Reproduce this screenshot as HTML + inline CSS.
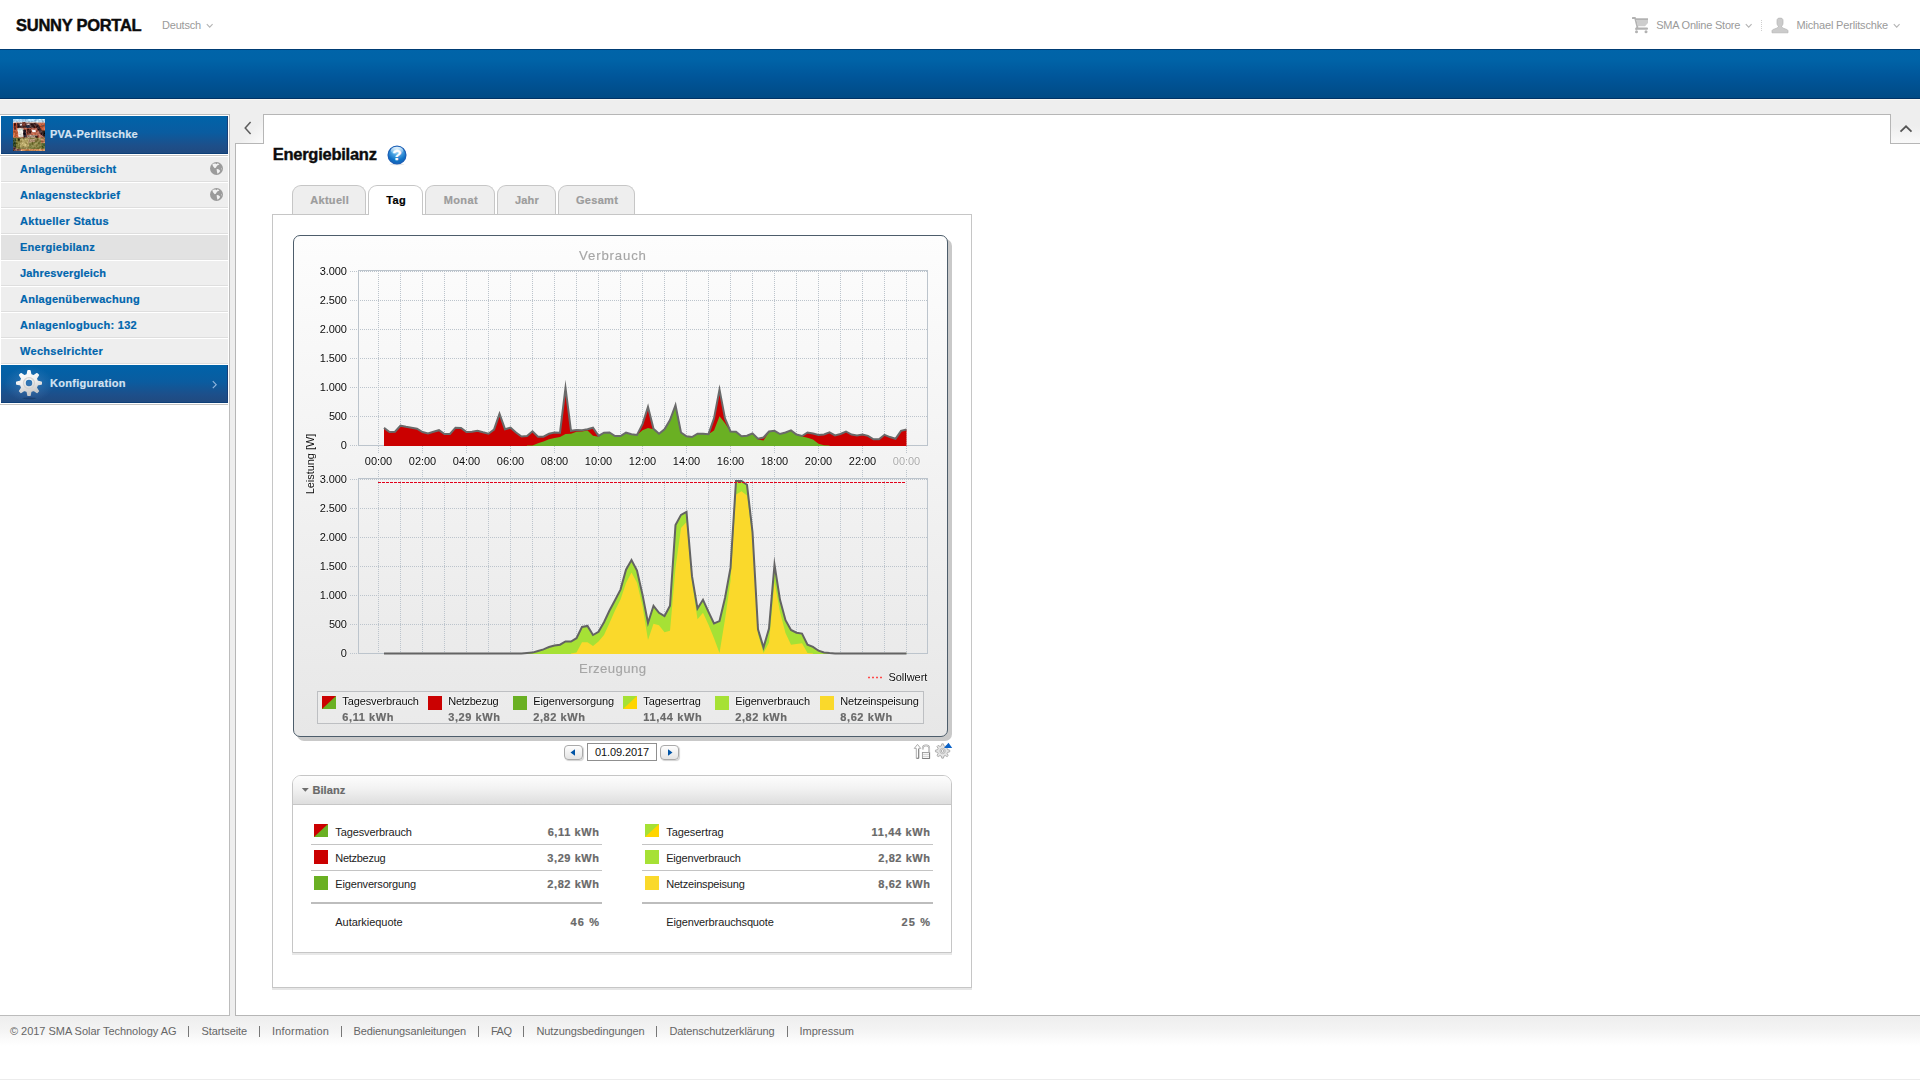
<!DOCTYPE html><html><head><meta charset="utf-8"><title>Sunny Portal</title><style>html,body{margin:0;padding:0;}
body{width:1920px;height:1080px;overflow:hidden;background:#fff;font-family:"Liberation Sans", sans-serif;font-size:11px;position:relative;}
div,span{box-sizing:border-box;}
.abs{position:absolute;}
#chart text:not([stroke]){paint-order:stroke;stroke:rgba(255,255,255,0.55);stroke-width:1.3px;stroke-linejoin:round;}</style></head><body>
<div style="position:absolute;left:16px;top:17.03px;font-size:16.5px;line-height:16.5px;font-weight:bold;color:#0c0c0c;letter-spacing:-0.271px;white-space:nowrap;-webkit-text-stroke:0.45px #0c0c0c;">SUNNY PORTAL</div>
<div style="position:absolute;left:162px;top:19.69px;font-size:11px;line-height:11px;font-weight:normal;color:#9a9a9a;letter-spacing:-0.194px;white-space:nowrap;">Deutsch</div>
<svg class="abs" style="left:206px;top:23px" width="8" height="6"><path d="M0.8,1.2 L3.7,4.2 L6.6,1.2" fill="none" stroke="#b4b4b4" stroke-width="1.1"/></svg>
<svg class="abs" style="left:1630px;top:15px" width="20" height="20" viewBox="1630 15 20 20">
<g fill="#b2b2b2"><rect x="1632" y="17" width="3.8" height="2" rx="0.6"/>
<path d="M1634.2,18 L1636,18 L1638.4,27.2 L1636.6,27.6 Z"/>
<path d="M1636,18.4 H1648 V23 L1645,26.2 H1637.8 Z" fill="#cdcdcd"/>
<rect x="1636" y="18.4" width="12" height="1.6"/>
<path d="M1636.6,26.8 L1638.4,27.2 L1637,29.8 H1635.2 Z"/>
<rect x="1635.2" y="27.6" width="12.8" height="2.2" rx="1"/>
<circle cx="1636.5" cy="31.8" r="1.5"/><circle cx="1646" cy="31.8" r="1.5"/></g></svg>
<div style="position:absolute;left:1656.2px;top:19.69px;font-size:11px;line-height:11px;font-weight:normal;color:#9a9a9a;letter-spacing:-0.215px;white-space:nowrap;">SMA Online Store</div>
<svg class="abs" style="left:1745px;top:23px" width="8" height="6"><path d="M0.8,1.2 L3.7,4.2 L6.6,1.2" fill="none" stroke="#b4b4b4" stroke-width="1.1"/></svg>
<div class="abs" style="left:1761px;top:20px;width:1px;height:11px;background:repeating-linear-gradient(to bottom,#cfcfcf 0,#cfcfcf 1px,transparent 1px,transparent 2px)"></div>
<svg class="abs" style="left:1770px;top:16px" width="20" height="19" viewBox="1770 16 20 19">
<path d="M1777,20.5 C1777,18.7 1778.2,18.1 1780,18.1 C1781.8,18.1 1783,18.7 1783,20.5 V23 C1783,24.6 1782.4,25.6 1781.6,26.2 V27 C1782.6,28.2 1784.5,28.6 1786,29.2 C1787.4,29.6 1788,30.2 1788,31 V32.8 H1772 V31 C1772,30.2 1772.6,29.6 1774,29.2 C1775.5,28.6 1777.4,28.2 1778.4,27 V26.2 C1777.6,25.6 1777,24.6 1777,23 Z" fill="#cbcbcb" stroke="#b4b4b4" stroke-width="0.7"/>
</svg>
<div style="position:absolute;left:1796.5px;top:19.69px;font-size:11px;line-height:11px;font-weight:normal;color:#9a9a9a;letter-spacing:-0.172px;white-space:nowrap;">Michael Perlitschke</div>
<svg class="abs" style="left:1893px;top:23px" width="8" height="6"><path d="M0.8,1.2 L3.7,4.2 L6.6,1.2" fill="none" stroke="#b4b4b4" stroke-width="1.1"/></svg>
<div class="abs" style="left:0;top:49px;width:1920px;height:50px;background:linear-gradient(to bottom,#0064a9 0%,#0063a7 22%,#00569a 55%,#004a84 100%)"></div>
<div class="abs" style="left:0;top:49px;width:1920px;height:1px;background:#003d74"></div>
<div class="abs" style="left:0;top:98px;width:1920px;height:1px;background:#003366"></div>
<div class="abs" style="left:0;top:99px;width:1920px;height:1px;background:#f6f6f2"></div>
<div class="abs" style="left:0;top:100px;width:1920px;height:916px;background:#eee"></div>
<div class="abs" style="left:0;top:114px;width:230px;height:902px;background:#fff;border:1px solid #bcbcbc;border-left:none"></div>
<div class="abs" style="left:1px;top:116px;width:227px;height:38px;background:linear-gradient(to bottom,#0063a9 0%,#0a5ca0 45%,#1d4f8a 80%,#204a80 100%);border-bottom:1px solid #0d3f77;border-right:1px solid #173f78"></div>
<div class="abs" style="left:0;top:155px;width:228px;height:1px;background:#c6c4c2"></div>
<svg class="abs" style="left:13px;top:119px" width="32" height="32" viewBox="0 0 32 32">
<defs><filter id="tb" x="0" y="0" width="100%" height="100%" color-interpolation-filters="sRGB"><feTurbulence type="fractalNoise" baseFrequency="0.42" numOctaves="2" seed="7" result="n"/><feColorMatrix in="n" type="matrix" values="1 0 0 0 0  1 0 0 0 0  1 0 0 0 0  0 0 0 0 1" result="n2"/><feComposite in="SourceGraphic" in2="n2" operator="arithmetic" k1="0" k2="1" k3="0.55" k4="-0.275"/></filter><clipPath id="tc"><rect width="32" height="32"/></clipPath></defs>
<g clip-path="url(#tc)"><g filter="url(#tb)">
<rect x="-2" y="-2" width="36" height="36" fill="#b65c44"/>
<rect x="-2" y="-2" width="36" height="5" fill="#aed6f4"/>
<rect x="26" y="-2" width="8" height="3.4" fill="#cfe6e6"/>
<rect x="-2" y="2.8" width="36" height="1.5" fill="#c9b2aa"/>
<rect x="-2" y="4" width="8" height="15" fill="#c25a3c"/>
<rect x="0.8" y="4" width="1.9" height="6.8" fill="#4a1c1a"/>
<rect x="-2" y="12" width="6" height="7" fill="#c4663e"/>
<path d="M4,4.2 L22,4.4 L22.6,8.8 L4.4,8.8 Z" fill="#2c1c22"/>
<rect x="6.8" y="4.6" width="2.3" height="2" fill="#f4e8ec"/>
<rect x="9.2" y="3.2" width="3.3" height="4" fill="#6e2e24"/>
<rect x="13.4" y="4.6" width="3.2" height="1.7" fill="#dcbcbc"/>
<rect x="13.4" y="6.2" width="3.2" height="3.4" fill="#2a3048"/>
<rect x="17" y="4.4" width="5" height="4" fill="#3c2222"/>
<path d="M24,4.4 L34,4.4 L34,12 L28.5,12 Z" fill="#c8623e"/>
<rect x="28" y="6" width="3.4" height="1.6" fill="#7c4c3c"/>
<path d="M21.5,4.5 L25,4.5 L27.4,9 L33,18 L33,20 L27.5,15.4 L24,10 Z" fill="#3c262a"/>
<path d="M24.6,10.4 L27.6,15 L31,19.6 L27,19.6 L24,15 Z" fill="#b06a5a"/>
<path d="M29,11.6 L33,11.6 L33,18.4 L30.6,17 Z" fill="#241c18"/>
<path d="M4.5,9.5 L10.6,9.5 L10.6,18.2 L5.6,18.2 Z" fill="#e8e4dc"/>
<rect x="4.6" y="9.4" width="5" height="2.6" fill="#dce6de"/>
<path d="M10.2,10.8 L12.6,10.4 L13.4,14 L13.6,18.6 L11,18.8 L10.2,15 Z" fill="#1a1422"/>
<path d="M13,9 L23,9 L25,13 L25,17 L14,17 Z" fill="#a85a48"/>
<rect x="14" y="10" width="4" height="4.6" fill="#5c2e26"/>
<path d="M18.8,10.8 L22.3,10.8 L23,13.3 L19.2,13.3 Z" fill="#f6eeee"/>
<rect x="19" y="13.6" width="5" height="2.4" fill="#c86c4e"/>
<rect x="14" y="16" width="10" height="2.5" fill="#a89484"/>
<rect x="22" y="16.8" width="2.6" height="2.3" fill="#2a1410"/>
<rect x="14.5" y="18.4" width="7" height="1.6" fill="#e0d0c0"/>
<rect x="-2" y="18.6" width="36" height="12" fill="#8a7e48"/>
<rect x="-2" y="19" width="5" height="9.4" fill="#3e5230"/>
<rect x="3" y="19" width="5" height="10" fill="#7a7838"/>
<rect x="5" y="19.4" width="2.6" height="2.2" fill="#38361a"/>
<path d="M7,20 L16,20 L16,28 L7,28 Z" fill="#b0a062"/>
<rect x="9" y="24.4" width="4.2" height="2.6" fill="#ccbc7c"/>
<rect x="15.5" y="20" width="6.5" height="6" fill="#b09272"/>
<path d="M16,23.4 L29,22.6 L29,30 L16,30 Z" fill="#7c7c40"/>
<rect x="20" y="24" width="5" height="4" fill="#8c8448"/>
<rect x="28" y="19.6" width="6" height="4.6" fill="#c08462"/>
<rect x="29" y="24" width="5" height="5" fill="#50622e"/>
<rect x="-2" y="28.2" width="5" height="6" fill="#4a2c34"/>
<rect x="-2" y="30" width="36" height="4" fill="#cc8c58"/>
<rect x="-2" y="30" width="10" height="4" fill="#7a5248"/>
</g></g></svg>
<div style="position:absolute;left:50px;top:128.69px;font-size:11px;line-height:11px;font-weight:bold;color:#d4e2f1;letter-spacing:0.255px;white-space:nowrap;-webkit-text-stroke:0.2px #d4e2f1;">PVA-Perlitschke</div>
<div class="abs" style="left:1px;top:156px;width:227px;height:26px;background:#eeeeee;border-top:1px solid #fff;border-bottom:1px solid #dedede"></div>
<div style="position:absolute;left:20px;top:163.69px;font-size:11px;line-height:11px;font-weight:bold;color:#0065ad;letter-spacing:0.225px;white-space:nowrap;-webkit-text-stroke:0.2px #0065ad;">Anlagenübersicht</div>
<svg class="abs" style="left:210px;top:162px" width="13" height="13" viewBox="0 0 13 13">
<circle cx="6.5" cy="6.5" r="6.5" fill="#9b9b9b"/>
<path d="M2.4,2.3 L3.2,1.7 L5.6,1.5 L6.6,2.3 L7.6,1.3 L9.4,2.3 L8.4,3.1 L7.2,3.5 L5.8,5.7 L4.8,6.3 L3.6,5.1 L2.8,3.7 Z" fill="#f2f2f2"/>
<path d="M6.6,7.3 L7.4,6.9 L8.8,7.5 L10.2,8.7 L9.6,10.1 L8.2,11.3 L7.4,11.7 L7,9.7 Z" fill="#f2f2f2"/>
<path d="M11.2,5.8 L12,6.2 L11.8,7.8 L11,7.2 Z" fill="#c6c6c6"/>
</svg>
<div class="abs" style="left:1px;top:182px;width:227px;height:26px;background:#eeeeee;border-top:1px solid #fff;border-bottom:1px solid #dedede"></div>
<div style="position:absolute;left:20px;top:189.69px;font-size:11px;line-height:11px;font-weight:bold;color:#0065ad;letter-spacing:0.284px;white-space:nowrap;-webkit-text-stroke:0.2px #0065ad;">Anlagensteckbrief</div>
<svg class="abs" style="left:210px;top:188px" width="13" height="13" viewBox="0 0 13 13">
<circle cx="6.5" cy="6.5" r="6.5" fill="#9b9b9b"/>
<path d="M2.4,2.3 L3.2,1.7 L5.6,1.5 L6.6,2.3 L7.6,1.3 L9.4,2.3 L8.4,3.1 L7.2,3.5 L5.8,5.7 L4.8,6.3 L3.6,5.1 L2.8,3.7 Z" fill="#f2f2f2"/>
<path d="M6.6,7.3 L7.4,6.9 L8.8,7.5 L10.2,8.7 L9.6,10.1 L8.2,11.3 L7.4,11.7 L7,9.7 Z" fill="#f2f2f2"/>
<path d="M11.2,5.8 L12,6.2 L11.8,7.8 L11,7.2 Z" fill="#c6c6c6"/>
</svg>
<div class="abs" style="left:1px;top:208px;width:227px;height:26px;background:#eeeeee;border-top:1px solid #fff;border-bottom:1px solid #dedede"></div>
<div style="position:absolute;left:20px;top:215.69px;font-size:11px;line-height:11px;font-weight:bold;color:#0065ad;letter-spacing:0.328px;white-space:nowrap;-webkit-text-stroke:0.2px #0065ad;">Aktueller Status</div>
<div class="abs" style="left:1px;top:234px;width:227px;height:26px;background:#e2e2e2;border-top:1px solid #fff;border-bottom:1px solid #dedede"></div>
<div style="position:absolute;left:20px;top:241.69px;font-size:11px;line-height:11px;font-weight:bold;color:#0065ad;letter-spacing:0.267px;white-space:nowrap;-webkit-text-stroke:0.2px #0065ad;">Energiebilanz</div>
<div class="abs" style="left:1px;top:260px;width:227px;height:26px;background:#eeeeee;border-top:1px solid #fff;border-bottom:1px solid #dedede"></div>
<div style="position:absolute;left:20px;top:267.69px;font-size:11px;line-height:11px;font-weight:bold;color:#0065ad;letter-spacing:0.161px;white-space:nowrap;-webkit-text-stroke:0.2px #0065ad;">Jahresvergleich</div>
<div class="abs" style="left:1px;top:286px;width:227px;height:26px;background:#eeeeee;border-top:1px solid #fff;border-bottom:1px solid #dedede"></div>
<div style="position:absolute;left:20px;top:293.69px;font-size:11px;line-height:11px;font-weight:bold;color:#0065ad;letter-spacing:0.283px;white-space:nowrap;-webkit-text-stroke:0.2px #0065ad;">Anlagenüberwachung</div>
<div class="abs" style="left:1px;top:312px;width:227px;height:26px;background:#eeeeee;border-top:1px solid #fff;border-bottom:1px solid #dedede"></div>
<div style="position:absolute;left:20px;top:319.69px;font-size:11px;line-height:11px;font-weight:bold;color:#0065ad;letter-spacing:0.303px;white-space:nowrap;-webkit-text-stroke:0.2px #0065ad;">Anlagenlogbuch: 132</div>
<div class="abs" style="left:1px;top:338px;width:227px;height:26px;background:#eeeeee;border-top:1px solid #fff;border-bottom:1px solid #dedede"></div>
<div style="position:absolute;left:20px;top:345.69px;font-size:11px;line-height:11px;font-weight:bold;color:#0065ad;letter-spacing:0.309px;white-space:nowrap;-webkit-text-stroke:0.2px #0065ad;">Wechselrichter</div>
<div class="abs" style="left:1px;top:365px;width:227px;height:38px;background:linear-gradient(to bottom,#0063a9 0%,#0a5ca0 45%,#1d4f8a 80%,#204a80 100%);border-bottom:1px solid #0d3f77;border-right:1px solid #173f78"></div>
<div class="abs" style="left:0;top:404px;width:228px;height:1px;background:#c6c4c2"></div>
<div class="abs" style="left:4px;top:366px;width:50px;height:36px;background:radial-gradient(ellipse at center,rgba(110,160,215,0.40) 0%,rgba(110,160,215,0) 70%)"></div>
<svg class="abs" style="left:14px;top:368px" width="30" height="33" viewBox="0 0 30 33">
<defs><linearGradient id="gg" x1="0" y1="0" x2="0.3" y2="1"><stop offset="0" stop-color="#ffffff"/><stop offset="0.55" stop-color="#efefef"/><stop offset="1" stop-color="#c8c8c8"/></linearGradient><filter id="gb" x="-20%" y="-200%" width="140%" height="500%"><feGaussianBlur stdDeviation="0.6"/></filter></defs>
<ellipse cx="15.4" cy="30.3" rx="7" ry="0.9" fill="rgba(8,28,60,0.32)" filter="url(#gb)"/>
<path d="M13.21,6.79 L14.03,2.84 L15.97,2.84 L16.79,6.79 L19.61,7.96 L22.99,5.75 L24.35,7.11 L22.14,10.49 L23.31,13.31 L27.26,14.13 L27.26,16.07 L23.31,16.89 L22.14,19.71 L24.35,23.09 L22.99,24.45 L19.61,22.24 L16.79,23.41 L15.97,27.36 L14.03,27.36 L13.21,23.41 L10.39,22.24 L7.01,24.45 L5.65,23.09 L7.86,19.71 L6.69,16.89 L2.74,16.07 L2.74,14.13 L6.69,13.31 L7.86,10.49 L5.65,7.11 L7.01,5.75 L10.39,7.96 Z M19.00,15.10 A4.0,4.0 0 1 0 11.00,15.10 A4.0,4.0 0 1 0 19.00,15.10 Z" fill="url(#gg)" fill-rule="evenodd" stroke="url(#gg)" stroke-width="1.5" stroke-linejoin="round"/>
<circle cx="15" cy="15.1" r="5.5" fill="none" stroke="#d2d2d2" stroke-width="1.3"/>
</svg>
<div style="position:absolute;left:50px;top:377.69px;font-size:11px;line-height:11px;font-weight:bold;color:#d4e2f1;letter-spacing:0.284px;white-space:nowrap;-webkit-text-stroke:0.2px #d4e2f1;">Konfiguration</div>
<svg class="abs" style="left:211px;top:380px" width="8" height="10"><path d="M1.8,1.2 L5.2,4.7 L1.8,8.2" fill="none" stroke="#8fb4dc" stroke-width="1.2"/></svg>
<div class="abs" style="left:235px;top:114px;width:1686px;height:902px;background:#fff;border:1px solid #b6b6b6"></div>
<div class="abs" style="left:235px;top:114px;width:28px;height:29px;background:linear-gradient(135deg,#eee 0%,#eee 55%,#fbfbfb 100%)"></div>
<div class="abs" style="left:235px;top:143px;width:29px;height:1px;background:#b6b6b6"></div>
<div class="abs" style="left:263px;top:114px;width:1px;height:30px;background:#b6b6b6"></div>
<svg class="abs" style="left:243px;top:121px" width="10" height="14"><path d="M7.6,1 L2.2,7 L7.6,13" fill="none" stroke="#5c5c5c" stroke-width="1.5"/></svg>
<div class="abs" style="left:1891px;top:114px;width:29px;height:29px;background:linear-gradient(to bottom,#eee 0%,#eee 40%,#f9f9f9 100%)"></div>
<div class="abs" style="left:1890px;top:143px;width:30px;height:1px;background:#b6b6b6"></div>
<div class="abs" style="left:1890px;top:114px;width:1px;height:30px;background:#b6b6b6"></div>
<svg class="abs" style="left:1899px;top:123px" width="14" height="10"><path d="M1.5,8.6 L7,3.3 L12.5,8.6" fill="none" stroke="#555" stroke-width="1.8"/></svg>
<div style="position:absolute;left:272.7px;top:146.03px;font-size:16.5px;line-height:16.5px;font-weight:bold;color:#0c0c0c;letter-spacing:-0.252px;white-space:nowrap;-webkit-text-stroke:0.4px #0c0c0c;">Energiebilanz</div>
<svg class="abs" style="left:386px;top:144px" width="22" height="22" viewBox="0 0 22 22">
<defs><radialGradient id="hg" cx="0.5" cy="0.22" r="0.85"><stop offset="0" stop-color="#c4e8fb"/><stop offset="0.32" stop-color="#55aae6"/><stop offset="0.68" stop-color="#0f72c6"/><stop offset="1" stop-color="#1561b4"/></radialGradient><linearGradient id="hh" x1="0" y1="0" x2="0" y2="1"><stop offset="0" stop-color="#fff" stop-opacity="0.75"/><stop offset="1" stop-color="#fff" stop-opacity="0.05"/></linearGradient></defs>
<ellipse cx="11" cy="20.3" rx="7.5" ry="0.9" fill="rgba(0,0,0,0.10)"/>
<circle cx="11" cy="11" r="8.9" fill="url(#hg)" stroke="#1b5fb6" stroke-width="1.3"/>
<ellipse cx="11" cy="6.4" rx="6.3" ry="3.6" fill="url(#hh)"/>
<text x="11" y="16" text-anchor="middle" font-family='"Liberation Sans", sans-serif' font-weight="bold" font-size="15.5" fill="#fff" stroke="#fff" stroke-width="0.3">?</text>
</svg>
<div class="abs" style="left:272px;top:214px;width:700px;height:774px;background:#fff;border:1px solid #c6c6c6;box-shadow:0 2px 0 #e6e6e6"></div>
<div class="abs" style="left:292px;top:185px;width:74px;height:29px;background:#eee;border:1px solid #c6c6c6;border-bottom:none;border-radius:9px 9px 0 0"></div>
<div style="position:absolute;left:129.66px;width:400px;text-align:center;top:194.69px;font-size:11px;line-height:11px;font-weight:bold;color:#9c9c9c;letter-spacing:0.33px;white-space:nowrap;-webkit-text-stroke:0.2px #9c9c9c;">Aktuell</div>
<div class="abs" style="left:368px;top:185px;width:55px;height:30px;background:#fff;border:1px solid #c6c6c6;border-bottom:none;border-radius:9px 9px 0 0"></div>
<div style="position:absolute;left:196.21px;width:400px;text-align:center;top:194.69px;font-size:11px;line-height:11px;font-weight:bold;color:#000;letter-spacing:0.417px;white-space:nowrap;-webkit-text-stroke:0.2px #000;">Tag</div>
<div class="abs" style="left:425px;top:185px;width:70px;height:29px;background:#eee;border:1px solid #c6c6c6;border-bottom:none;border-radius:9px 9px 0 0"></div>
<div style="position:absolute;left:260.90px;width:400px;text-align:center;top:194.69px;font-size:11px;line-height:11px;font-weight:bold;color:#9c9c9c;letter-spacing:0.402px;white-space:nowrap;-webkit-text-stroke:0.2px #9c9c9c;">Monat</div>
<div class="abs" style="left:497px;top:185px;width:59px;height:29px;background:#eee;border:1px solid #c6c6c6;border-bottom:none;border-radius:9px 9px 0 0"></div>
<div style="position:absolute;left:326.99px;width:400px;text-align:center;top:194.69px;font-size:11px;line-height:11px;font-weight:bold;color:#9c9c9c;letter-spacing:0.188px;white-space:nowrap;-webkit-text-stroke:0.2px #9c9c9c;">Jahr</div>
<div class="abs" style="left:558px;top:185px;width:77px;height:29px;background:#eee;border:1px solid #c6c6c6;border-bottom:none;border-radius:9px 9px 0 0"></div>
<div style="position:absolute;left:397.05px;width:400px;text-align:center;top:194.69px;font-size:11px;line-height:11px;font-weight:bold;color:#9c9c9c;letter-spacing:0.307px;white-space:nowrap;-webkit-text-stroke:0.2px #9c9c9c;">Gesamt</div>
<div class="abs" style="left:297px;top:239px;width:655px;height:502px;background:#c9c9c9;border-radius:7px"></div>
<div class="abs" style="left:293px;top:235px;width:655px;height:502px;background:linear-gradient(to bottom,#fdfdfd 0%,#f4f4f4 40%,#e7e7e7 100%);border:1px solid #4d5d6b;border-radius:7px"></div>
<svg class="abs" style="left:293px;top:235px;will-change:transform;opacity:0.999" width="655" height="502" viewBox="293 235 655 502" font-family='"Liberation Sans", sans-serif' font-size="11" id="chart">
<rect x="358.5" y="270.5" width="569" height="175" fill="none" stroke="#bcc4cc" stroke-width="1"/>
<line x1="350" y1="445.5" x2="358" y2="445.5" stroke="#bcc4cc" stroke-width="1" stroke-dasharray="1,1"/>
<line x1="360" y1="416.5" x2="927" y2="416.5" stroke="#bcc4cc" stroke-width="1" stroke-dasharray="1,1"/>
<line x1="350" y1="416.5" x2="358" y2="416.5" stroke="#bcc4cc" stroke-width="1" stroke-dasharray="1,1"/>
<line x1="360" y1="387.5" x2="927" y2="387.5" stroke="#bcc4cc" stroke-width="1" stroke-dasharray="1,1"/>
<line x1="350" y1="387.5" x2="358" y2="387.5" stroke="#bcc4cc" stroke-width="1" stroke-dasharray="1,1"/>
<line x1="360" y1="358.5" x2="927" y2="358.5" stroke="#bcc4cc" stroke-width="1" stroke-dasharray="1,1"/>
<line x1="350" y1="358.5" x2="358" y2="358.5" stroke="#bcc4cc" stroke-width="1" stroke-dasharray="1,1"/>
<line x1="360" y1="329.5" x2="927" y2="329.5" stroke="#bcc4cc" stroke-width="1" stroke-dasharray="1,1"/>
<line x1="350" y1="329.5" x2="358" y2="329.5" stroke="#bcc4cc" stroke-width="1" stroke-dasharray="1,1"/>
<line x1="360" y1="300.5" x2="927" y2="300.5" stroke="#bcc4cc" stroke-width="1" stroke-dasharray="1,1"/>
<line x1="350" y1="300.5" x2="358" y2="300.5" stroke="#bcc4cc" stroke-width="1" stroke-dasharray="1,1"/>
<line x1="360" y1="271.5" x2="927" y2="271.5" stroke="#bcc4cc" stroke-width="1" stroke-dasharray="1,1"/>
<line x1="350" y1="271.5" x2="358" y2="271.5" stroke="#bcc4cc" stroke-width="1" stroke-dasharray="1,1"/>
<line x1="378.5" y1="271" x2="378.5" y2="445" stroke="#bcc4cc" stroke-width="1" stroke-dasharray="1,1"/>
<line x1="400.5" y1="271" x2="400.5" y2="445" stroke="#bcc4cc" stroke-width="1" stroke-dasharray="1,1"/>
<line x1="422.5" y1="271" x2="422.5" y2="445" stroke="#bcc4cc" stroke-width="1" stroke-dasharray="1,1"/>
<line x1="444.5" y1="271" x2="444.5" y2="445" stroke="#bcc4cc" stroke-width="1" stroke-dasharray="1,1"/>
<line x1="466.5" y1="271" x2="466.5" y2="445" stroke="#bcc4cc" stroke-width="1" stroke-dasharray="1,1"/>
<line x1="488.5" y1="271" x2="488.5" y2="445" stroke="#bcc4cc" stroke-width="1" stroke-dasharray="1,1"/>
<line x1="510.5" y1="271" x2="510.5" y2="445" stroke="#bcc4cc" stroke-width="1" stroke-dasharray="1,1"/>
<line x1="532.5" y1="271" x2="532.5" y2="445" stroke="#bcc4cc" stroke-width="1" stroke-dasharray="1,1"/>
<line x1="554.5" y1="271" x2="554.5" y2="445" stroke="#bcc4cc" stroke-width="1" stroke-dasharray="1,1"/>
<line x1="576.5" y1="271" x2="576.5" y2="445" stroke="#bcc4cc" stroke-width="1" stroke-dasharray="1,1"/>
<line x1="598.5" y1="271" x2="598.5" y2="445" stroke="#bcc4cc" stroke-width="1" stroke-dasharray="1,1"/>
<line x1="620.5" y1="271" x2="620.5" y2="445" stroke="#bcc4cc" stroke-width="1" stroke-dasharray="1,1"/>
<line x1="642.5" y1="271" x2="642.5" y2="445" stroke="#bcc4cc" stroke-width="1" stroke-dasharray="1,1"/>
<line x1="664.5" y1="271" x2="664.5" y2="445" stroke="#bcc4cc" stroke-width="1" stroke-dasharray="1,1"/>
<line x1="686.5" y1="271" x2="686.5" y2="445" stroke="#bcc4cc" stroke-width="1" stroke-dasharray="1,1"/>
<line x1="708.5" y1="271" x2="708.5" y2="445" stroke="#bcc4cc" stroke-width="1" stroke-dasharray="1,1"/>
<line x1="730.5" y1="271" x2="730.5" y2="445" stroke="#bcc4cc" stroke-width="1" stroke-dasharray="1,1"/>
<line x1="752.5" y1="271" x2="752.5" y2="445" stroke="#bcc4cc" stroke-width="1" stroke-dasharray="1,1"/>
<line x1="774.5" y1="271" x2="774.5" y2="445" stroke="#bcc4cc" stroke-width="1" stroke-dasharray="1,1"/>
<line x1="796.5" y1="271" x2="796.5" y2="445" stroke="#bcc4cc" stroke-width="1" stroke-dasharray="1,1"/>
<line x1="818.5" y1="271" x2="818.5" y2="445" stroke="#bcc4cc" stroke-width="1" stroke-dasharray="1,1"/>
<line x1="840.5" y1="271" x2="840.5" y2="445" stroke="#bcc4cc" stroke-width="1" stroke-dasharray="1,1"/>
<line x1="862.5" y1="271" x2="862.5" y2="445" stroke="#bcc4cc" stroke-width="1" stroke-dasharray="1,1"/>
<line x1="884.5" y1="271" x2="884.5" y2="445" stroke="#bcc4cc" stroke-width="1" stroke-dasharray="1,1"/>
<line x1="906.5" y1="271" x2="906.5" y2="445" stroke="#bcc4cc" stroke-width="1" stroke-dasharray="1,1"/>
<rect x="358.5" y="478.5" width="569" height="175" fill="none" stroke="#bcc4cc" stroke-width="1"/>
<line x1="350" y1="653.5" x2="358" y2="653.5" stroke="#bcc4cc" stroke-width="1" stroke-dasharray="1,1"/>
<line x1="360" y1="624.5" x2="927" y2="624.5" stroke="#bcc4cc" stroke-width="1" stroke-dasharray="1,1"/>
<line x1="350" y1="624.5" x2="358" y2="624.5" stroke="#bcc4cc" stroke-width="1" stroke-dasharray="1,1"/>
<line x1="360" y1="595.5" x2="927" y2="595.5" stroke="#bcc4cc" stroke-width="1" stroke-dasharray="1,1"/>
<line x1="350" y1="595.5" x2="358" y2="595.5" stroke="#bcc4cc" stroke-width="1" stroke-dasharray="1,1"/>
<line x1="360" y1="566.5" x2="927" y2="566.5" stroke="#bcc4cc" stroke-width="1" stroke-dasharray="1,1"/>
<line x1="350" y1="566.5" x2="358" y2="566.5" stroke="#bcc4cc" stroke-width="1" stroke-dasharray="1,1"/>
<line x1="360" y1="537.5" x2="927" y2="537.5" stroke="#bcc4cc" stroke-width="1" stroke-dasharray="1,1"/>
<line x1="350" y1="537.5" x2="358" y2="537.5" stroke="#bcc4cc" stroke-width="1" stroke-dasharray="1,1"/>
<line x1="360" y1="508.5" x2="927" y2="508.5" stroke="#bcc4cc" stroke-width="1" stroke-dasharray="1,1"/>
<line x1="350" y1="508.5" x2="358" y2="508.5" stroke="#bcc4cc" stroke-width="1" stroke-dasharray="1,1"/>
<line x1="360" y1="479.5" x2="927" y2="479.5" stroke="#bcc4cc" stroke-width="1" stroke-dasharray="1,1"/>
<line x1="350" y1="479.5" x2="358" y2="479.5" stroke="#bcc4cc" stroke-width="1" stroke-dasharray="1,1"/>
<line x1="378.5" y1="479" x2="378.5" y2="653" stroke="#bcc4cc" stroke-width="1" stroke-dasharray="1,1"/>
<line x1="400.5" y1="479" x2="400.5" y2="653" stroke="#bcc4cc" stroke-width="1" stroke-dasharray="1,1"/>
<line x1="422.5" y1="479" x2="422.5" y2="653" stroke="#bcc4cc" stroke-width="1" stroke-dasharray="1,1"/>
<line x1="444.5" y1="479" x2="444.5" y2="653" stroke="#bcc4cc" stroke-width="1" stroke-dasharray="1,1"/>
<line x1="466.5" y1="479" x2="466.5" y2="653" stroke="#bcc4cc" stroke-width="1" stroke-dasharray="1,1"/>
<line x1="488.5" y1="479" x2="488.5" y2="653" stroke="#bcc4cc" stroke-width="1" stroke-dasharray="1,1"/>
<line x1="510.5" y1="479" x2="510.5" y2="653" stroke="#bcc4cc" stroke-width="1" stroke-dasharray="1,1"/>
<line x1="532.5" y1="479" x2="532.5" y2="653" stroke="#bcc4cc" stroke-width="1" stroke-dasharray="1,1"/>
<line x1="554.5" y1="479" x2="554.5" y2="653" stroke="#bcc4cc" stroke-width="1" stroke-dasharray="1,1"/>
<line x1="576.5" y1="479" x2="576.5" y2="653" stroke="#bcc4cc" stroke-width="1" stroke-dasharray="1,1"/>
<line x1="598.5" y1="479" x2="598.5" y2="653" stroke="#bcc4cc" stroke-width="1" stroke-dasharray="1,1"/>
<line x1="620.5" y1="479" x2="620.5" y2="653" stroke="#bcc4cc" stroke-width="1" stroke-dasharray="1,1"/>
<line x1="642.5" y1="479" x2="642.5" y2="653" stroke="#bcc4cc" stroke-width="1" stroke-dasharray="1,1"/>
<line x1="664.5" y1="479" x2="664.5" y2="653" stroke="#bcc4cc" stroke-width="1" stroke-dasharray="1,1"/>
<line x1="686.5" y1="479" x2="686.5" y2="653" stroke="#bcc4cc" stroke-width="1" stroke-dasharray="1,1"/>
<line x1="708.5" y1="479" x2="708.5" y2="653" stroke="#bcc4cc" stroke-width="1" stroke-dasharray="1,1"/>
<line x1="730.5" y1="479" x2="730.5" y2="653" stroke="#bcc4cc" stroke-width="1" stroke-dasharray="1,1"/>
<line x1="752.5" y1="479" x2="752.5" y2="653" stroke="#bcc4cc" stroke-width="1" stroke-dasharray="1,1"/>
<line x1="774.5" y1="479" x2="774.5" y2="653" stroke="#bcc4cc" stroke-width="1" stroke-dasharray="1,1"/>
<line x1="796.5" y1="479" x2="796.5" y2="653" stroke="#bcc4cc" stroke-width="1" stroke-dasharray="1,1"/>
<line x1="818.5" y1="479" x2="818.5" y2="653" stroke="#bcc4cc" stroke-width="1" stroke-dasharray="1,1"/>
<line x1="840.5" y1="479" x2="840.5" y2="653" stroke="#bcc4cc" stroke-width="1" stroke-dasharray="1,1"/>
<line x1="862.5" y1="479" x2="862.5" y2="653" stroke="#bcc4cc" stroke-width="1" stroke-dasharray="1,1"/>
<line x1="884.5" y1="479" x2="884.5" y2="653" stroke="#bcc4cc" stroke-width="1" stroke-dasharray="1,1"/>
<line x1="906.5" y1="479" x2="906.5" y2="653" stroke="#bcc4cc" stroke-width="1" stroke-dasharray="1,1"/>
<line x1="378.5" y1="446" x2="378.5" y2="454" stroke="#bcc4cc" stroke-width="1" stroke-dasharray="1,1"/>
<line x1="378.5" y1="470" x2="378.5" y2="478" stroke="#bcc4cc" stroke-width="1" stroke-dasharray="1,1"/>
<line x1="422.5" y1="446" x2="422.5" y2="454" stroke="#bcc4cc" stroke-width="1" stroke-dasharray="1,1"/>
<line x1="422.5" y1="470" x2="422.5" y2="478" stroke="#bcc4cc" stroke-width="1" stroke-dasharray="1,1"/>
<line x1="466.5" y1="446" x2="466.5" y2="454" stroke="#bcc4cc" stroke-width="1" stroke-dasharray="1,1"/>
<line x1="466.5" y1="470" x2="466.5" y2="478" stroke="#bcc4cc" stroke-width="1" stroke-dasharray="1,1"/>
<line x1="510.5" y1="446" x2="510.5" y2="454" stroke="#bcc4cc" stroke-width="1" stroke-dasharray="1,1"/>
<line x1="510.5" y1="470" x2="510.5" y2="478" stroke="#bcc4cc" stroke-width="1" stroke-dasharray="1,1"/>
<line x1="554.5" y1="446" x2="554.5" y2="454" stroke="#bcc4cc" stroke-width="1" stroke-dasharray="1,1"/>
<line x1="554.5" y1="470" x2="554.5" y2="478" stroke="#bcc4cc" stroke-width="1" stroke-dasharray="1,1"/>
<line x1="598.5" y1="446" x2="598.5" y2="454" stroke="#bcc4cc" stroke-width="1" stroke-dasharray="1,1"/>
<line x1="598.5" y1="470" x2="598.5" y2="478" stroke="#bcc4cc" stroke-width="1" stroke-dasharray="1,1"/>
<line x1="642.5" y1="446" x2="642.5" y2="454" stroke="#bcc4cc" stroke-width="1" stroke-dasharray="1,1"/>
<line x1="642.5" y1="470" x2="642.5" y2="478" stroke="#bcc4cc" stroke-width="1" stroke-dasharray="1,1"/>
<line x1="686.5" y1="446" x2="686.5" y2="454" stroke="#bcc4cc" stroke-width="1" stroke-dasharray="1,1"/>
<line x1="686.5" y1="470" x2="686.5" y2="478" stroke="#bcc4cc" stroke-width="1" stroke-dasharray="1,1"/>
<line x1="730.5" y1="446" x2="730.5" y2="454" stroke="#bcc4cc" stroke-width="1" stroke-dasharray="1,1"/>
<line x1="730.5" y1="470" x2="730.5" y2="478" stroke="#bcc4cc" stroke-width="1" stroke-dasharray="1,1"/>
<line x1="774.5" y1="446" x2="774.5" y2="454" stroke="#bcc4cc" stroke-width="1" stroke-dasharray="1,1"/>
<line x1="774.5" y1="470" x2="774.5" y2="478" stroke="#bcc4cc" stroke-width="1" stroke-dasharray="1,1"/>
<line x1="818.5" y1="446" x2="818.5" y2="454" stroke="#bcc4cc" stroke-width="1" stroke-dasharray="1,1"/>
<line x1="818.5" y1="470" x2="818.5" y2="478" stroke="#bcc4cc" stroke-width="1" stroke-dasharray="1,1"/>
<line x1="862.5" y1="446" x2="862.5" y2="454" stroke="#bcc4cc" stroke-width="1" stroke-dasharray="1,1"/>
<line x1="862.5" y1="470" x2="862.5" y2="478" stroke="#bcc4cc" stroke-width="1" stroke-dasharray="1,1"/>
<line x1="906.5" y1="446" x2="906.5" y2="454" stroke="#bcc4cc" stroke-width="1" stroke-dasharray="1,1"/>
<line x1="906.5" y1="470" x2="906.5" y2="478" stroke="#bcc4cc" stroke-width="1" stroke-dasharray="1,1"/>
<text x="346.27" y="448.9" text-anchor="end" fill="#0c0c0c" font-weight="normal" font-size="11" letter-spacing="-0.725" >0</text>
<text x="346.88" y="419.9" text-anchor="end" fill="#0c0c0c" font-weight="normal" font-size="11" letter-spacing="-0.12" >500</text>
<text x="346.93" y="390.9" text-anchor="end" fill="#0c0c0c" font-weight="normal" font-size="11" letter-spacing="-0.066" >1.000</text>
<text x="346.93" y="361.9" text-anchor="end" fill="#0c0c0c" font-weight="normal" font-size="11" letter-spacing="-0.066" >1.500</text>
<text x="346.93" y="332.9" text-anchor="end" fill="#0c0c0c" font-weight="normal" font-size="11" letter-spacing="-0.066" >2.000</text>
<text x="346.93" y="303.9" text-anchor="end" fill="#0c0c0c" font-weight="normal" font-size="11" letter-spacing="-0.066" >2.500</text>
<text x="346.93" y="274.9" text-anchor="end" fill="#0c0c0c" font-weight="normal" font-size="11" letter-spacing="-0.066" >3.000</text>
<text x="346.27" y="656.9" text-anchor="end" fill="#0c0c0c" font-weight="normal" font-size="11" letter-spacing="-0.725" >0</text>
<text x="346.88" y="627.9" text-anchor="end" fill="#0c0c0c" font-weight="normal" font-size="11" letter-spacing="-0.12" >500</text>
<text x="346.93" y="598.9" text-anchor="end" fill="#0c0c0c" font-weight="normal" font-size="11" letter-spacing="-0.066" >1.000</text>
<text x="346.93" y="569.9" text-anchor="end" fill="#0c0c0c" font-weight="normal" font-size="11" letter-spacing="-0.066" >1.500</text>
<text x="346.93" y="540.9" text-anchor="end" fill="#0c0c0c" font-weight="normal" font-size="11" letter-spacing="-0.066" >2.000</text>
<text x="346.93" y="511.9" text-anchor="end" fill="#0c0c0c" font-weight="normal" font-size="11" letter-spacing="-0.066" >2.500</text>
<text x="346.93" y="482.9" text-anchor="end" fill="#0c0c0c" font-weight="normal" font-size="11" letter-spacing="-0.066" >3.000</text>
<text x="378.47" y="465" text-anchor="middle" fill="#0c0c0c" font-weight="normal" font-size="11" letter-spacing="-0.066" >00:00</text>
<text x="422.47" y="465" text-anchor="middle" fill="#0c0c0c" font-weight="normal" font-size="11" letter-spacing="-0.066" >02:00</text>
<text x="466.47" y="465" text-anchor="middle" fill="#0c0c0c" font-weight="normal" font-size="11" letter-spacing="-0.066" >04:00</text>
<text x="510.47" y="465" text-anchor="middle" fill="#0c0c0c" font-weight="normal" font-size="11" letter-spacing="-0.066" >06:00</text>
<text x="554.47" y="465" text-anchor="middle" fill="#0c0c0c" font-weight="normal" font-size="11" letter-spacing="-0.066" >08:00</text>
<text x="598.47" y="465" text-anchor="middle" fill="#0c0c0c" font-weight="normal" font-size="11" letter-spacing="-0.066" >10:00</text>
<text x="642.47" y="465" text-anchor="middle" fill="#0c0c0c" font-weight="normal" font-size="11" letter-spacing="-0.066" >12:00</text>
<text x="686.47" y="465" text-anchor="middle" fill="#0c0c0c" font-weight="normal" font-size="11" letter-spacing="-0.066" >14:00</text>
<text x="730.47" y="465" text-anchor="middle" fill="#0c0c0c" font-weight="normal" font-size="11" letter-spacing="-0.066" >16:00</text>
<text x="774.47" y="465" text-anchor="middle" fill="#0c0c0c" font-weight="normal" font-size="11" letter-spacing="-0.066" >18:00</text>
<text x="818.47" y="465" text-anchor="middle" fill="#0c0c0c" font-weight="normal" font-size="11" letter-spacing="-0.066" >20:00</text>
<text x="862.47" y="465" text-anchor="middle" fill="#0c0c0c" font-weight="normal" font-size="11" letter-spacing="-0.066" >22:00</text>
<text x="906.47" y="465" text-anchor="middle" fill="#aaa" font-weight="normal" font-size="11" letter-spacing="-0.066" >00:00</text>
<text transform="translate(314,464.0265) rotate(-90)" text-anchor="middle" fill="#0c0c0c" letter-spacing="-0.053">Leistung [W]</text>
<text x="612.92" y="260" text-anchor="middle" fill="#a6a6a6" font-weight="normal" font-size="13.2" letter-spacing="0.842" stroke="#a6a6a6" stroke-width="0.15">Verbrauch</text>
<text x="612.71" y="673" text-anchor="middle" fill="#a6a6a6" font-weight="normal" font-size="13.2" letter-spacing="0.411" stroke="#a6a6a6" stroke-width="0.15">Erzeugung</text>
<path d="M384.00,427.92 L389.50,432.08 L395.00,431.67 L400.50,425.67 L406.00,426.83 L411.50,427.67 L417.00,428.75 L422.50,432.08 L428.00,433.50 L433.50,431.83 L439.00,430.17 L444.50,434.00 L450.00,434.00 L455.50,427.67 L461.00,427.92 L466.50,432.08 L472.00,431.83 L477.50,430.67 L483.00,432.33 L488.50,433.75 L494.00,429.58 L499.50,413.83 L505.00,429.17 L510.50,427.67 L516.00,432.50 L521.50,436.50 L527.00,436.00 L532.50,431.25 L538.00,436.67 L543.50,436.67 L549.00,433.75 L554.50,432.50 L560.00,432.67 L565.50,387.75 L571.00,430.83 L576.50,430.00 L582.00,430.17 L587.50,429.17 L593.00,427.67 L598.50,435.83 L604.00,432.67 L609.50,432.50 L615.00,436.00 L620.50,436.00 L626.00,432.67 L631.50,434.17 L637.00,435.00 L642.50,424.17 L648.00,407.00 L653.50,428.75 L659.00,433.75 L664.50,429.33 L670.00,420.00 L675.50,405.25 L681.00,432.50 L686.50,436.25 L692.00,437.08 L697.50,433.75 L703.00,433.75 L708.50,434.17 L714.00,418.33 L719.50,389.50 L725.00,418.33 L730.50,431.50 L736.00,431.83 L741.50,436.25 L747.00,435.67 L752.50,433.33 L758.00,438.75 L763.50,437.50 L769.00,431.50 L774.50,430.83 L780.00,434.00 L785.50,432.50 L791.00,430.42 L796.50,434.58 L802.00,436.00 L807.50,432.50 L813.00,433.58 L818.50,434.92 L824.00,434.42 L829.50,432.33 L835.00,435.42 L840.50,434.00 L846.00,431.50 L851.50,434.58 L857.00,435.42 L862.50,434.58 L868.00,435.83 L873.50,439.33 L879.00,439.33 L884.50,434.83 L890.00,437.08 L895.50,438.75 L901.00,430.83 L906.50,429.58 L906.50,446 L384.00,446 Z" fill="#cb0000"/>
<path d="M527.00,445.50 L532.50,445.42 L538.00,443.33 L543.50,441.50 L549.00,439.33 L554.50,437.92 L560.00,437.08 L565.50,434.00 L571.00,433.75 L576.50,431.67 L582.00,431.50 L587.50,430.42 L593.00,435.83 L598.50,436.67 L604.00,432.67 L609.50,432.50 L615.00,436.00 L620.50,436.00 L626.00,432.67 L631.50,434.17 L637.00,435.00 L642.50,430.17 L648.00,427.92 L653.50,429.33 L659.00,433.75 L664.50,429.33 L670.00,420.00 L675.50,405.25 L681.00,432.50 L686.50,436.25 L692.00,437.08 L697.50,433.75 L703.00,433.75 L708.50,434.17 L714.00,430.42 L719.50,416.25 L725.00,423.33 L730.50,431.50 L736.00,431.83 L741.50,436.25 L747.00,435.67 L752.50,433.33 L758.00,439.58 L763.50,440.42 L769.00,432.08 L774.50,430.83 L780.00,434.00 L785.50,432.50 L791.00,430.42 L796.50,434.58 L802.00,436.50 L807.50,437.67 L813.00,439.58 L818.50,443.75 L824.00,445.33 L829.50,445.50 L829.50,446 L527.00,446 Z" fill="#6ab023"/>
<path d="M384.00,427.92 L389.50,432.08 L395.00,431.67 L400.50,425.67 L406.00,426.83 L411.50,427.67 L417.00,428.75 L422.50,432.08 L428.00,433.50 L433.50,431.83 L439.00,430.17 L444.50,434.00 L450.00,434.00 L455.50,427.67 L461.00,427.92 L466.50,432.08 L472.00,431.83 L477.50,430.67 L483.00,432.33 L488.50,433.75 L494.00,429.58 L499.50,413.83 L505.00,429.17 L510.50,427.67 L516.00,432.50 L521.50,436.50 L527.00,436.00 L532.50,431.25 L538.00,436.67 L543.50,436.67 L549.00,433.75 L554.50,432.50 L560.00,432.67 L565.50,387.75 L571.00,430.83 L576.50,430.00 L582.00,430.17 L587.50,429.17 L593.00,427.67 L598.50,435.83 L604.00,432.67 L609.50,432.50 L615.00,436.00 L620.50,436.00 L626.00,432.67 L631.50,434.17 L637.00,435.00 L642.50,424.17 L648.00,407.00 L653.50,428.75 L659.00,433.75 L664.50,429.33 L670.00,420.00 L675.50,405.25 L681.00,432.50 L686.50,436.25 L692.00,437.08 L697.50,433.75 L703.00,433.75 L708.50,434.17 L714.00,418.33 L719.50,389.50 L725.00,418.33 L730.50,431.50 L736.00,431.83 L741.50,436.25 L747.00,435.67 L752.50,433.33 L758.00,438.75 L763.50,437.50 L769.00,431.50 L774.50,430.83 L780.00,434.00 L785.50,432.50 L791.00,430.42 L796.50,434.58 L802.00,436.00 L807.50,432.50 L813.00,433.58 L818.50,434.92 L824.00,434.42 L829.50,432.33 L835.00,435.42 L840.50,434.00 L846.00,431.50 L851.50,434.58 L857.00,435.42 L862.50,434.58 L868.00,435.83 L873.50,439.33 L879.00,439.33 L884.50,434.83 L890.00,437.08 L895.50,438.75 L901.00,430.83 L906.50,429.58" fill="none" stroke="#6a6a6a" stroke-width="2" stroke-linejoin="miter" stroke-miterlimit="12"/>
<path d="M384.00,653.50 L389.50,653.50 L395.00,653.50 L400.50,653.50 L406.00,653.50 L411.50,653.50 L417.00,653.50 L422.50,653.50 L428.00,653.50 L433.50,653.50 L439.00,653.50 L444.50,653.50 L450.00,653.50 L455.50,653.50 L461.00,653.50 L466.50,653.50 L472.00,653.50 L477.50,653.50 L483.00,653.50 L488.50,653.50 L494.00,653.50 L499.50,653.50 L505.00,653.50 L510.50,653.50 L516.00,653.50 L521.50,653.50 L527.00,653.10 L532.50,652.60 L538.00,651.00 L543.50,649.40 L549.00,647.00 L554.50,645.60 L560.00,644.70 L565.50,641.50 L571.00,641.50 L576.50,638.20 L582.00,626.90 L587.50,625.90 L593.00,635.00 L598.50,631.80 L604.00,622.20 L609.50,610.50 L615.00,600.30 L620.50,589.60 L626.00,569.70 L631.50,560.00 L637.00,570.60 L642.50,594.70 L648.00,623.00 L653.50,605.80 L659.00,612.80 L664.50,616.00 L670.00,605.80 L675.50,525.10 L681.00,514.90 L686.50,511.80 L692.00,576.20 L697.50,608.60 L703.00,599.80 L708.50,611.90 L714.00,623.40 L719.50,621.10 L725.00,598.00 L730.50,567.90 L736.00,480.90 L741.50,480.90 L747.00,484.80 L752.50,532.00 L758.00,629.40 L763.50,647.50 L769.00,628.50 L774.50,564.60 L780.00,599.80 L785.50,620.20 L791.00,629.90 L796.50,632.70 L802.00,633.60 L807.50,644.70 L813.00,646.90 L818.50,650.70 L824.00,652.40 L829.50,653.10 L835.00,653.50 L840.50,653.50 L846.00,653.50 L851.50,653.50 L857.00,653.50 L862.50,653.50 L868.00,653.50 L873.50,653.50 L879.00,653.50 L884.50,653.50 L890.00,653.50 L895.50,653.50 L901.00,653.50 L906.50,653.50 L906.50,654 L384.00,654 Z" fill="#a6e135"/>
<path d="M571.00,653.50 L576.50,652.60 L582.00,642.20 L587.50,642.20 L593.00,646.10 L598.50,641.50 L604.00,635.00 L609.50,623.00 L615.00,610.50 L620.50,599.40 L626.00,583.10 L631.50,572.50 L637.00,582.70 L642.50,606.30 L648.00,640.10 L653.50,623.70 L659.00,625.30 L664.50,632.20 L670.00,630.80 L675.50,568.00 L681.00,527.90 L686.50,521.90 L692.00,582.20 L697.50,619.30 L703.00,612.80 L708.50,624.80 L714.00,638.20 L719.50,653.10 L725.00,619.30 L730.50,581.30 L736.00,494.50 L741.50,491.30 L747.00,495.50 L752.50,536.70 L758.00,634.10 L763.50,653.10 L769.00,642.40 L774.50,582.00 L780.00,611.90 L785.50,633.10 L791.00,644.70 L796.50,644.10 L802.00,643.30 L807.50,653.10 L813.00,653.50 L813.00,654 L571.00,654 Z" fill="#fad92b"/>
<path d="M384.00,653.50 L389.50,653.50 L395.00,653.50 L400.50,653.50 L406.00,653.50 L411.50,653.50 L417.00,653.50 L422.50,653.50 L428.00,653.50 L433.50,653.50 L439.00,653.50 L444.50,653.50 L450.00,653.50 L455.50,653.50 L461.00,653.50 L466.50,653.50 L472.00,653.50 L477.50,653.50 L483.00,653.50 L488.50,653.50 L494.00,653.50 L499.50,653.50 L505.00,653.50 L510.50,653.50 L516.00,653.50 L521.50,653.50 L527.00,653.10 L532.50,652.60 L538.00,651.00 L543.50,649.40 L549.00,647.00 L554.50,645.60 L560.00,644.70 L565.50,641.50 L571.00,641.50 L576.50,638.20 L582.00,626.90 L587.50,625.90 L593.00,635.00 L598.50,631.80 L604.00,622.20 L609.50,610.50 L615.00,600.30 L620.50,589.60 L626.00,569.70 L631.50,560.00 L637.00,570.60 L642.50,594.70 L648.00,623.00 L653.50,605.80 L659.00,612.80 L664.50,616.00 L670.00,605.80 L675.50,525.10 L681.00,514.90 L686.50,511.80 L692.00,576.20 L697.50,608.60 L703.00,599.80 L708.50,611.90 L714.00,623.40 L719.50,621.10 L725.00,598.00 L730.50,567.90 L736.00,480.90 L741.50,480.90 L747.00,484.80 L752.50,532.00 L758.00,629.40 L763.50,647.50 L769.00,628.50 L774.50,564.60 L780.00,599.80 L785.50,620.20 L791.00,629.90 L796.50,632.70 L802.00,633.60 L807.50,644.70 L813.00,646.90 L818.50,650.70 L824.00,652.40 L829.50,653.10 L835.00,653.50 L840.50,653.50 L846.00,653.50 L851.50,653.50 L857.00,653.50 L862.50,653.50 L868.00,653.50 L873.50,653.50 L879.00,653.50 L884.50,653.50 L890.00,653.50 L895.50,653.50 L901.00,653.50 L906.50,653.50" fill="none" stroke="#636363" stroke-width="2" stroke-linejoin="miter" stroke-miterlimit="12"/>
<line x1="378" y1="482.5" x2="906" y2="482.5" stroke="#e2001a" stroke-width="1.2" stroke-dasharray="3,1"/>
<line x1="868" y1="677.5" x2="883" y2="677.5" stroke="#ff4a4a" stroke-width="1.4" stroke-dasharray="2,2"/>
<text x="888.50" y="681" text-anchor="start" fill="#0c0c0c" font-weight="normal" font-size="11" letter-spacing="-0.041" >Sollwert</text>
<rect x="317.5" y="691.5" width="606" height="32" fill="rgba(255,255,255,0.15)" stroke="#bdbfc2" stroke-width="1"/>
<rect x="322" y="696" width="14" height="13" fill="#6ab023"/>
<path d="M322,696 H336 L322,709 Z" fill="#cb0000"/>
<text x="342.30" y="705" text-anchor="start" fill="#0c0c0c" font-weight="normal" font-size="11" letter-spacing="-0.127" >Tagesverbrauch</text>
<text x="342.30" y="721" text-anchor="start" fill="#696969" font-weight="bold" font-size="11" letter-spacing="0.59" stroke="#696969" stroke-width="0.2">6,11 kWh</text>
<rect x="428" y="696" width="14" height="14" fill="#cb0000"/>
<text x="448.30" y="705" text-anchor="start" fill="#0c0c0c" font-weight="normal" font-size="11" letter-spacing="-0.288" >Netzbezug</text>
<text x="448.30" y="721" text-anchor="start" fill="#696969" font-weight="bold" font-size="11" letter-spacing="0.552" stroke="#696969" stroke-width="0.2">3,29 kWh</text>
<rect x="513" y="696" width="14" height="14" fill="#6ab023"/>
<text x="533.30" y="705" text-anchor="start" fill="#0c0c0c" font-weight="normal" font-size="11" letter-spacing="-0.171" >Eigenversorgung</text>
<text x="533.30" y="721" text-anchor="start" fill="#696969" font-weight="bold" font-size="11" letter-spacing="0.552" stroke="#696969" stroke-width="0.2">2,82 kWh</text>
<rect x="623" y="696" width="14" height="13" fill="#ffd500"/>
<path d="M623,696 H637 L623,709 Z" fill="#a6e135"/>
<text x="643.30" y="705" text-anchor="start" fill="#0c0c0c" font-weight="normal" font-size="11" letter-spacing="-0.054" >Tagesertrag</text>
<text x="643.30" y="721" text-anchor="start" fill="#696969" font-weight="bold" font-size="11" letter-spacing="0.644" stroke="#696969" stroke-width="0.2">11,44 kWh</text>
<rect x="715" y="696" width="14" height="14" fill="#a6e135"/>
<text x="735.30" y="705" text-anchor="start" fill="#0c0c0c" font-weight="normal" font-size="11" letter-spacing="-0.176" >Eigenverbrauch</text>
<text x="735.30" y="721" text-anchor="start" fill="#696969" font-weight="bold" font-size="11" letter-spacing="0.577" stroke="#696969" stroke-width="0.2">2,82 kWh</text>
<rect x="820" y="696" width="14" height="14" fill="#fad92b"/>
<text x="840.30" y="705" text-anchor="start" fill="#0c0c0c" font-weight="normal" font-size="11" letter-spacing="-0.196" >Netzeinspeisung</text>
<text x="840.30" y="721" text-anchor="start" fill="#696969" font-weight="bold" font-size="11" letter-spacing="0.589" stroke="#696969" stroke-width="0.2">8,62 kWh</text>
</svg>
<div class="abs" style="left:564px;top:745px;width:19px;height:15px;border:1px solid #aaa;border-radius:4px;background:linear-gradient(to bottom,#fefefe,#e4e4e4);box-shadow:1px 1px 1px rgba(0,0,0,0.18)"><svg width="17" height="13" viewBox="0 0 18 14" style="position:absolute;left:0;top:0"><path d="M10.6,3.4 L5.8,7 L10.6,10.6 Z" fill="#0054a6"/></svg></div>
<div class="abs" style="left:587px;top:743px;width:70px;height:18px;border:1px solid #8f8f8f;background:#fff"></div>
<div style="position:absolute;left:595px;top:746.69px;font-size:11px;line-height:11px;font-weight:normal;color:#111;letter-spacing:-0.106px;white-space:nowrap;">01.09.2017</div>
<div class="abs" style="left:660px;top:745px;width:19px;height:15px;border:1px solid #aaa;border-radius:4px;background:linear-gradient(to bottom,#fefefe,#e4e4e4);box-shadow:1px 1px 1px rgba(0,0,0,0.18)"><svg width="17" height="13" viewBox="0 0 18 14" style="position:absolute;left:0;top:0"><path d="M7.4,3.4 L12.2,7 L7.4,10.6 Z" fill="#0054a6"/></svg></div>
<svg class="abs" style="left:912px;top:741px" width="20" height="20" viewBox="912 741 20 20">
<path d="M917.5,744.4 L914.3,748.4 H916.3 V758.3 H918.7 V748.4 H920.7 Z" fill="#fff" stroke="#a2a2a2" stroke-width="0.9" stroke-linejoin="round"/>
<path d="M918.7,749 V758.3 H916.6" fill="none" stroke="#7e7e7e" stroke-width="0.9"/>
<rect x="922.4" y="752.5" width="7.2" height="6" fill="#f6f6f6" stroke="#9a9a9a" stroke-width="0.9"/>
<path d="M929.6,752.5 V758.5 H922.4" fill="none" stroke="#7a7a7a" stroke-width="0.9"/>
<path d="M922.8,749.6 V748 C922.8,744.4 929.2,744.4 929.2,748 V752.4" fill="none" stroke="#9e9e9e" stroke-width="1.7"/>
<path d="M922.8,749.6 V748 C922.8,744.4 929.2,744.4 929.2,748 V752.4" fill="none" stroke="#fff" stroke-width="0.6"/>
<line x1="923" y1="754.5" x2="929" y2="754.5" stroke="#cfcfcf" stroke-width="0.8"/><line x1="923" y1="756.5" x2="929" y2="756.5" stroke="#cfcfcf" stroke-width="0.8"/>
</svg>
<svg class="abs" style="left:934px;top:741px" width="20" height="20" viewBox="934 741 20 20">
<path d="M941.23,745.98 L941.81,743.84 L943.39,743.84 L943.97,745.98 L945.18,746.48 L947.10,745.38 L948.22,746.50 L947.12,748.42 L947.62,749.63 L949.76,750.21 L949.76,751.79 L947.62,752.37 L947.12,753.58 L948.22,755.50 L947.10,756.62 L945.18,755.52 L943.97,756.02 L943.39,758.16 L941.81,758.16 L941.23,756.02 L940.02,755.52 L938.10,756.62 L936.98,755.50 L938.08,753.58 L937.58,752.37 L935.44,751.79 L935.44,750.21 L937.58,749.63 L938.08,748.42 L936.98,746.50 L938.10,745.38 L940.02,746.48 Z M943.90,751.00 A1.3,1.3 0 1 0 941.30,751.00 A1.3,1.3 0 1 0 943.90,751.00 Z" fill="#e4e4e4" fill-rule="evenodd" stroke="#a6a6a6" stroke-width="0.9" stroke-linejoin="round"/>
<circle cx="942.6" cy="751" r="2.7" fill="none" stroke="#b8b8b8" stroke-width="0.9"/>
<path d="M944,747.9 L948.5,742.8 L952.2,747.9 Z" fill="#0a62c8"/>
</svg>
<div class="abs" style="left:292px;top:775px;width:660px;height:178px;background:#fff;border:1px solid #c6c6c6;border-radius:9px 9px 0 0;box-shadow:0 2px 0 #e8e8e8"></div>
<div class="abs" style="left:293px;top:776px;width:658px;height:29px;background:linear-gradient(to bottom,#fdfdfd 0%,#f2f2f2 45%,#dedede 100%);border-bottom:1px solid #c6c6c6;border-radius:8px 8px 0 0"></div>
<svg class="abs" style="left:301px;top:787px" width="9" height="6"><path d="M0.8,1 H7.8 L4.3,4.8 Z" fill="#6e6e6e"/></svg>
<div style="position:absolute;left:312.4px;top:784.69px;font-size:11px;line-height:11px;font-weight:bold;color:#696969;letter-spacing:0.116px;white-space:nowrap;-webkit-text-stroke:0.2px #696969;">Bilanz</div>
<svg class="abs" style="left:314px;top:824px" width="14" height="13"><rect width="14" height="13" fill="#6ab023"/><path d="M0,0 H14 L0,13 Z" fill="#cb0000"/></svg>
<div style="position:absolute;left:335.3px;top:826.69px;font-size:11px;line-height:11px;font-weight:normal;color:#222;letter-spacing:-0.127px;white-space:nowrap;">Tagesverbrauch</div>
<div style="position:absolute;right:1320.38px;top:826.69px;font-size:11px;line-height:11px;font-weight:bold;color:#696969;letter-spacing:0.615px;white-space:nowrap;-webkit-text-stroke:0.2px #696969;">6,11 kWh</div>
<div class="abs" style="left:311px;top:844px;width:291px;height:1px;background:#c4c4c4"></div>
<div class="abs" style="left:314px;top:850px;width:14px;height:14px;background:#cb0000"></div>
<div style="position:absolute;left:335.3px;top:852.69px;font-size:11px;line-height:11px;font-weight:normal;color:#222;letter-spacing:-0.288px;white-space:nowrap;">Netzbezug</div>
<div style="position:absolute;right:1320.44px;top:852.69px;font-size:11px;line-height:11px;font-weight:bold;color:#696969;letter-spacing:0.564px;white-space:nowrap;-webkit-text-stroke:0.2px #696969;">3,29 kWh</div>
<div class="abs" style="left:311px;top:870px;width:291px;height:1px;background:#c4c4c4"></div>
<div class="abs" style="left:314px;top:876px;width:14px;height:14px;background:#6ab023"></div>
<div style="position:absolute;left:335.3px;top:878.69px;font-size:11px;line-height:11px;font-weight:normal;color:#222;letter-spacing:-0.171px;white-space:nowrap;">Eigenversorgung</div>
<div style="position:absolute;right:1320.44px;top:878.69px;font-size:11px;line-height:11px;font-weight:bold;color:#696969;letter-spacing:0.564px;white-space:nowrap;-webkit-text-stroke:0.2px #696969;">2,82 kWh</div>
<div class="abs" style="left:311px;top:902px;width:291px;height:2px;background:#bdbdbd"></div>
<div style="position:absolute;left:335.3px;top:916.69px;font-size:11px;line-height:11px;font-weight:normal;color:#222;letter-spacing:-0.045px;white-space:nowrap;">Autarkiequote</div>
<div style="position:absolute;right:1319.87px;top:916.69px;font-size:11px;line-height:11px;font-weight:bold;color:#696969;letter-spacing:1.13px;white-space:nowrap;-webkit-text-stroke:0.2px #696969;">46 %</div>
<svg class="abs" style="left:645px;top:824px" width="14" height="13"><rect width="14" height="13" fill="#ffd500"/><path d="M0,0 H14 L0,13 Z" fill="#a6e135"/></svg>
<div style="position:absolute;left:666.2px;top:826.69px;font-size:11px;line-height:11px;font-weight:normal;color:#222;letter-spacing:-0.054px;white-space:nowrap;">Tagesertrag</div>
<div style="position:absolute;right:989.33px;top:826.69px;font-size:11px;line-height:11px;font-weight:bold;color:#696969;letter-spacing:0.666px;white-space:nowrap;-webkit-text-stroke:0.2px #696969;">11,44 kWh</div>
<div class="abs" style="left:642px;top:844px;width:291px;height:1px;background:#c4c4c4"></div>
<div class="abs" style="left:645px;top:850px;width:14px;height:14px;background:#a6e135"></div>
<div style="position:absolute;left:666.2px;top:852.69px;font-size:11px;line-height:11px;font-weight:normal;color:#222;letter-spacing:-0.176px;white-space:nowrap;">Eigenverbrauch</div>
<div style="position:absolute;right:989.44px;top:852.69px;font-size:11px;line-height:11px;font-weight:bold;color:#696969;letter-spacing:0.564px;white-space:nowrap;-webkit-text-stroke:0.2px #696969;">2,82 kWh</div>
<div class="abs" style="left:642px;top:870px;width:291px;height:1px;background:#c4c4c4"></div>
<div class="abs" style="left:645px;top:876px;width:14px;height:14px;background:#fad92b"></div>
<div style="position:absolute;left:666.2px;top:878.69px;font-size:11px;line-height:11px;font-weight:normal;color:#222;letter-spacing:-0.196px;white-space:nowrap;">Netzeinspeisung</div>
<div style="position:absolute;right:989.44px;top:878.69px;font-size:11px;line-height:11px;font-weight:bold;color:#696969;letter-spacing:0.564px;white-space:nowrap;-webkit-text-stroke:0.2px #696969;">8,62 kWh</div>
<div class="abs" style="left:642px;top:902px;width:291px;height:2px;background:#bdbdbd"></div>
<div style="position:absolute;left:666.2px;top:916.69px;font-size:11px;line-height:11px;font-weight:normal;color:#222;letter-spacing:-0.124px;white-space:nowrap;">Eigenverbrauchsquote</div>
<div style="position:absolute;right:988.87px;top:916.69px;font-size:11px;line-height:11px;font-weight:bold;color:#696969;letter-spacing:1.13px;white-space:nowrap;-webkit-text-stroke:0.2px #696969;">25 %</div>
<div class="abs" style="left:0;top:1016px;width:1920px;height:64px;background:linear-gradient(to bottom,#eeeeee 0%,#f3f3f3 20%,#fbfbfb 37%,#ffffff 47%)"></div>
<div class="abs" style="left:0;top:1079px;width:1920px;height:1px;background:#ececec"></div>
<div style="position:absolute;left:10px;top:1025.69px;font-size:11px;line-height:11px;font-weight:normal;color:#666;letter-spacing:-0.034px;white-space:nowrap;">© 2017 SMA Solar Technology AG</div>
<div style="position:absolute;left:201.5px;top:1025.69px;font-size:11px;line-height:11px;font-weight:normal;color:#666;letter-spacing:-0.097px;white-space:nowrap;">Startseite</div>
<div style="position:absolute;left:272px;top:1025.69px;font-size:11px;line-height:11px;font-weight:normal;color:#666;letter-spacing:0.179px;white-space:nowrap;">Information</div>
<div style="position:absolute;left:353.5px;top:1025.69px;font-size:11px;line-height:11px;font-weight:normal;color:#666;letter-spacing:-0.119px;white-space:nowrap;">Bedienungsanleitungen</div>
<div style="position:absolute;left:491px;top:1025.69px;font-size:11px;line-height:11px;font-weight:normal;color:#666;letter-spacing:-0.505px;white-space:nowrap;">FAQ</div>
<div style="position:absolute;left:536.5px;top:1025.69px;font-size:11px;line-height:11px;font-weight:normal;color:#666;letter-spacing:-0.11px;white-space:nowrap;">Nutzungsbedingungen</div>
<div style="position:absolute;left:669.5px;top:1025.69px;font-size:11px;line-height:11px;font-weight:normal;color:#666;letter-spacing:-0.101px;white-space:nowrap;">Datenschutzerklärung</div>
<div style="position:absolute;left:799.5px;top:1025.69px;font-size:11px;line-height:11px;font-weight:normal;color:#666;letter-spacing:0.01px;white-space:nowrap;">Impressum</div>
<div class="abs" style="left:188.0px;top:1026px;width:1px;height:11px;background:#777"></div>
<div class="abs" style="left:259.0px;top:1026px;width:1px;height:11px;background:#777"></div>
<div class="abs" style="left:341.0px;top:1026px;width:1px;height:11px;background:#777"></div>
<div class="abs" style="left:478.0px;top:1026px;width:1px;height:11px;background:#777"></div>
<div class="abs" style="left:523.0px;top:1026px;width:1px;height:11px;background:#777"></div>
<div class="abs" style="left:656.0px;top:1026px;width:1px;height:11px;background:#777"></div>
<div class="abs" style="left:786.5px;top:1026px;width:1px;height:11px;background:#777"></div>
</body></html>
